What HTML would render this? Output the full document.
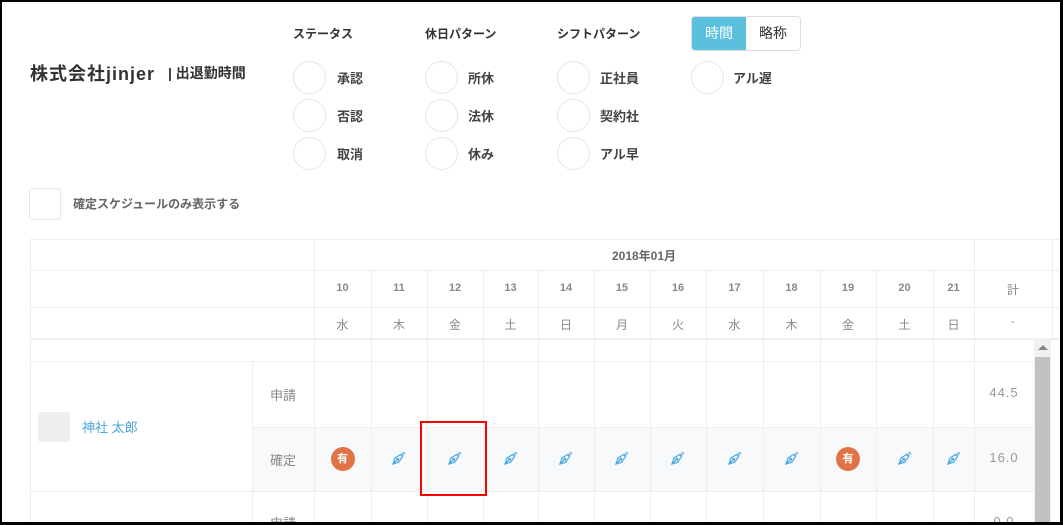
<!DOCTYPE html><html style="width:1063px;height:525px;overflow:hidden"><head><meta charset="utf-8"><style>
*{box-sizing:border-box;margin:0;padding:0}
body{width:1063px;height:525px;overflow:hidden;background:#fff;font-family:"Liberation Sans","Noto Sans CJK JP",sans-serif;position:relative;color:#555}
.a{position:absolute}
.frame{position:absolute;left:0;top:0;width:1063px;height:525px;border:2px solid #000;border-right-width:3px;border-bottom-width:3px;z-index:10;pointer-events:none}
.lbl{font-size:12px;color:#333;font-weight:bold}
.rad{position:absolute;width:33px;height:33px;border:1.5px solid #e6e6e6;border-radius:50%}
.rt{position:absolute;font-size:13px;font-weight:bold;color:#444}
.h{position:absolute;background:#eee;height:1px}
.v{position:absolute;background:#eee;width:1px}
.c{position:absolute;text-align:center;font-size:11px;color:#888}
.badge{position:absolute;width:24px;height:24px;border-radius:50%;background:#e07447;color:#fff;font-size:11px;font-weight:bold;text-align:center;line-height:24px}
.pen{position:absolute;width:16px;height:16px}
</style></head><body>
<div class="a" style="left:30px;top:60px;font-size:18px;font-weight:bold;color:#333;letter-spacing:1px">株式会社jinjer</div>
<div class="a" style="left:168px;top:63px;font-size:14px;font-weight:bold;color:#333">| 出退勤時間</div>
<div class="a lbl" style="left:293px;top:25px">ステータス</div>
<div class="a lbl" style="left:425px;top:25px">休日パターン</div>
<div class="a lbl" style="left:557px;top:25px">シフトパターン</div>
<div class="a" style="left:691px;top:16px;width:110px;height:35px;border:1px solid #ddd;border-radius:4px;overflow:hidden">
<div class="a" style="left:0;top:0;width:54px;height:35px;background:#5bc0de;color:#fff;font-size:14px;text-align:center;line-height:33px">時間</div>
<div class="a" style="left:54px;top:0;width:54px;height:35px;color:#333;font-size:14px;text-align:center;line-height:33px">略称</div></div>
<div class="rad" style="left:293px;top:61px"></div><div class="rt" style="left:337px;top:68px">承認</div>
<div class="rad" style="left:293px;top:99px"></div><div class="rt" style="left:337px;top:106px">否認</div>
<div class="rad" style="left:293px;top:137px"></div><div class="rt" style="left:337px;top:144px">取消</div>
<div class="rad" style="left:425px;top:61px"></div><div class="rt" style="left:468px;top:68px">所休</div>
<div class="rad" style="left:425px;top:99px"></div><div class="rt" style="left:468px;top:106px">法休</div>
<div class="rad" style="left:425px;top:137px"></div><div class="rt" style="left:468px;top:144px">休み</div>
<div class="rad" style="left:557px;top:61px"></div><div class="rt" style="left:600px;top:68px">正社員</div>
<div class="rad" style="left:557px;top:99px"></div><div class="rt" style="left:600px;top:106px">契約社</div>
<div class="rad" style="left:557px;top:137px"></div><div class="rt" style="left:600px;top:144px">アル早</div>
<div class="rad" style="left:691px;top:61px"></div><div class="rt" style="left:733px;top:68px">アル遅</div>
<div class="a" style="left:29px;top:188px;width:32px;height:32px;border:1.5px solid #e6e6e6;border-radius:3px"></div>
<div class="a" style="left:73px;top:195px;font-size:12px;font-weight:bold;color:#666">確定スケジュールのみ表示する</div>

<div class="a" style="left:252px;top:427px;width:782px;height:64px;background:#f8f9fb"></div>
<div class="h" style="left:30px;top:239px;width:1031px"></div>
<div class="h" style="left:30px;top:270px;width:1031px"></div>
<div class="h" style="left:30px;top:307px;width:1031px"></div>
<div class="h" style="left:30px;top:338px;width:1031px;height:2px"></div>
<div class="h" style="left:30px;top:361px;width:1004px"></div>
<div class="h" style="left:252px;top:427px;width:782px"></div>
<div class="h" style="left:30px;top:491px;width:1004px"></div>
<div class="v" style="left:30px;top:239px;height:286px"></div>
<div class="v" style="left:314px;top:239px;height:286px"></div>
<div class="v" style="left:252px;top:361px;height:164px"></div>
<div class="v" style="left:974px;top:239px;height:286px"></div>
<div class="v" style="left:1052px;top:239px;height:100px"></div>
<div class="c" style="left:314px;top:247px;width:660px;font-weight:bold;color:#666;font-size:12px">2018年01月</div>
<div id="cols"></div>
<div class="c" style="left:974px;top:281px;width:78px;font-size:12px">計</div>
<div class="c" style="left:974px;top:316px;width:78px">-</div>
<div class="c" style="left:252px;top:385px;width:62px;font-size:13px;color:#888">申請</div>
<div class="c" style="left:252px;top:450px;width:62px;font-size:13px;color:#888">確定</div>
<div class="c" style="left:252px;top:513px;width:62px;font-size:13px;color:#888">申請</div>
<div class="c" style="left:974px;top:385px;width:60px;font-size:13px;color:#999;letter-spacing:1px">44.5</div>
<div class="c" style="left:974px;top:450px;width:60px;font-size:13px;color:#999;letter-spacing:1px">16.0</div>
<div class="c" style="left:974px;top:514px;width:60px;font-size:13px;color:#999;letter-spacing:1px">0.0</div>
<div class="a" style="left:38px;top:412px;width:32px;height:30px;background:#eee;border-radius:3px"></div>
<div class="a" style="left:82px;top:417px;font-size:13px;color:#4aa8dc">神社 太郎</div>
<div class="a" style="left:1034px;top:338px;width:17px;height:187px;background:#f1f1f1"></div>
<div class="a" style="left:1035px;top:357px;width:15px;height:170px;background:#c1c1c1"></div>
<div class="a" style="left:1038px;top:345px;width:0;height:0;border-left:5px solid transparent;border-right:5px solid transparent;border-bottom:5px solid #888"></div>
<div class="a" style="left:420px;top:421px;width:67px;height:75px;border:2px solid #f00"></div>
<script>
var b=[314,371,427,483,538,594,650,706,763,820,876,933,974],d=[10,11,12,13,14,15,16,17,18,19,20,21],w="水木金土日月火水木金土日",h='';
var pen='<svg viewBox="0 0 16 16" fill="none" stroke="#4aa8dc" stroke-width="1.2"><path d="M2 14 L4 8 L9.5 4.5 L11.5 6.5 L8 12 Z"/><path d="M2 14 L6.5 9.5"/><circle cx="6.8" cy="9.2" r="0.9"/><path d="M10.5 3.5 L12.5 5.5"/><path d="M12 2 L14 4"/></svg>';
for(var i=0;i<12;i++){var L=b[i],W=b[i+1]-b[i],cx=L+W/2;
h+='<div class="v" style="left:'+b[i+1]+'px;top:270px;height:255px"></div>';
h+='<div class="c" style="left:'+L+'px;top:282px;width:'+W+'px;font-weight:bold">'+d[i]+'</div>';
h+='<div class="c" style="left:'+L+'px;top:316px;width:'+W+'px;font-size:12px">'+w[i]+'</div>';
if(i==0||i==9)h+='<div class="badge" style="left:'+(cx-12)+'px;top:447px">有</div>';
else h+='<div class="pen" style="left:'+(cx-8)+'px;top:450px">'+pen+'</div>';}
document.getElementById('cols').innerHTML=h;
</script>
<div class="frame"></div>
</body></html>
